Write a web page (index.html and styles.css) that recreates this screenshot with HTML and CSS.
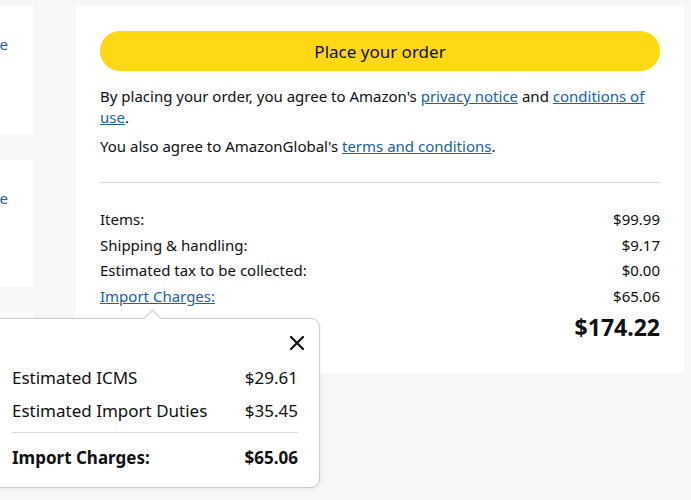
FILE: index.html
```html
<!DOCTYPE html>
<html lang="en">
<head>
<meta charset="utf-8">
<link rel="stylesheet" href="styles.css">
</head>
<body>
<div class="page">
  <div class="side">
    <div class="side-card"><a class="side-link" href="#">Change</a></div>
    <div class="side-card"><a class="side-link" href="#">Change</a></div>
    <div class="side-card"></div>
  </div>
  <div class="main">
    <button class="order-btn">Place your order</button>
    <p class="legal">By placing your order, you agree to Amazon's <a href="#">privacy notice</a> and <a href="#">conditions of use</a>.</p>
    <p class="legal second">You also agree to AmazonGlobal's <a href="#">terms and conditions</a>.</p>
    <hr class="divider">
    <div class="summary">
      <div class="row"><span>Items:</span><span>$99.99</span></div>
      <div class="row"><span>Shipping &amp; handling:</span><span>$9.17</span></div>
      <div class="row"><span>Estimated tax to be collected:</span><span>$0.00</span></div>
      <div class="row"><a href="#" class="import-link">Import Charges:</a><span>$65.06</span></div>
      <div class="row total"><span></span><span>$174.22</span></div>
    </div>
  </div>
</div>
<div class="popover">
  <div class="arrow"></div>
  <button class="close" aria-label="Close">
    <svg width="14" height="14" viewBox="0 0 14 14"><path d="M1 1L13 13M13 1L1 13" stroke="#0F1111" stroke-width="2.2" stroke-linecap="square"/></svg>
  </button>
  <div class="pop-row first"><span>Estimated ICMS</span><span>$29.61</span></div>
  <div class="pop-row"><span>Estimated Import Duties</span><span>$35.45</span></div>
  <div class="pop-divider"></div>
  <div class="pop-row strong"><span>Import Charges:</span><span>$65.06</span></div>
</div>
</body>
</html>
```
FILE: styles.css
```css
* { box-sizing: border-box; }
html, body { margin: 0; padding: 0; }
body {
  background: #f7f7f7;
  font-family: "Noto Sans", "Open Sans", sans-serif;
  color: #0F1111;
  width: 691px;
  height: 500px;
  overflow: hidden;
  position: relative;
}
a { color: #2162A1; text-decoration: underline; }
.page {
  display: flex;
  align-items: flex-start;
  gap: 42px;
  padding-top: 6px;
}
.side {
  width: 33px;
  display: flex;
  flex-direction: column;
  gap: 26px;
}
.side-card {
  background: #fff;
  height: 128px;
  overflow: hidden;
  display: flex;
  justify-content: flex-end;
  padding-top: 27px;
}
.side-card:nth-child(2) { height: 127px; }
.side-link {
  font-size: 15px;
  line-height: 22px;
  height: 22px;
  text-decoration: none;
  margin-right: 25px;
  white-space: nowrap;
}
.main {
  width: 610px;
  height: 367px;
  background: #fff;
  padding: 25px;
}
.order-btn {
  display: block;
  width: 100%;
  height: 40px;
  border: none;
  border-radius: 20px;
  background: #FFD814;
  color: #0F1111;
  font-family: inherit;
  font-size: 17px;
}
.legal {
  margin: 15px 0 0;
  font-size: 15px;
  line-height: 21px;
}
.legal.second { margin-top: 8px; }
.divider {
  border: none;
  border-top: 1px solid #D5D9D9;
  margin: 25px 0 0;
}
.summary { margin-top: 24px; }
.row {
  display: flex;
  justify-content: space-between;
  font-size: 15px;
  line-height: 25.7px;
}
.row.total {
  font-size: 23px;
  font-weight: 700;
  line-height: 32px;
  margin-top: 1px;
}
.popover {
  position: absolute;
  left: -12px;
  top: 318px;
  width: 332px;
  height: 170px;
  background: #fff;
  border: 1px solid #C9CCCC;
  border-radius: 9px;
  box-shadow: 0 1px 4px rgba(0,0,0,0.08);
  padding: 45px 21px 0 23px;
}
.arrow {
  position: absolute;
  left: 157px;
  top: -7px;
  width: 13px;
  height: 13px;
  background: #fff;
  border-left: 1px solid #C9CCCC;
  border-top: 1px solid #C9CCCC;
  transform: rotate(45deg);
}
.close {
  position: absolute;
  right: 14px;
  top: 16px;
  width: 16px;
  height: 16px;
  padding: 0;
  border: none;
  background: none;
  display: flex;
  align-items: center;
  justify-content: center;
}
.pop-row {
  display: flex;
  justify-content: space-between;
  font-size: 17px;
  line-height: 28px;
  margin-top: 5px;
}
.pop-row.first { margin-top: 0; }
.pop-divider {
  border-top: 1px solid #D5D9D9;
  margin-top: 7px;
}
.pop-row.strong { font-weight: 700; margin-top: 11px; }
```
